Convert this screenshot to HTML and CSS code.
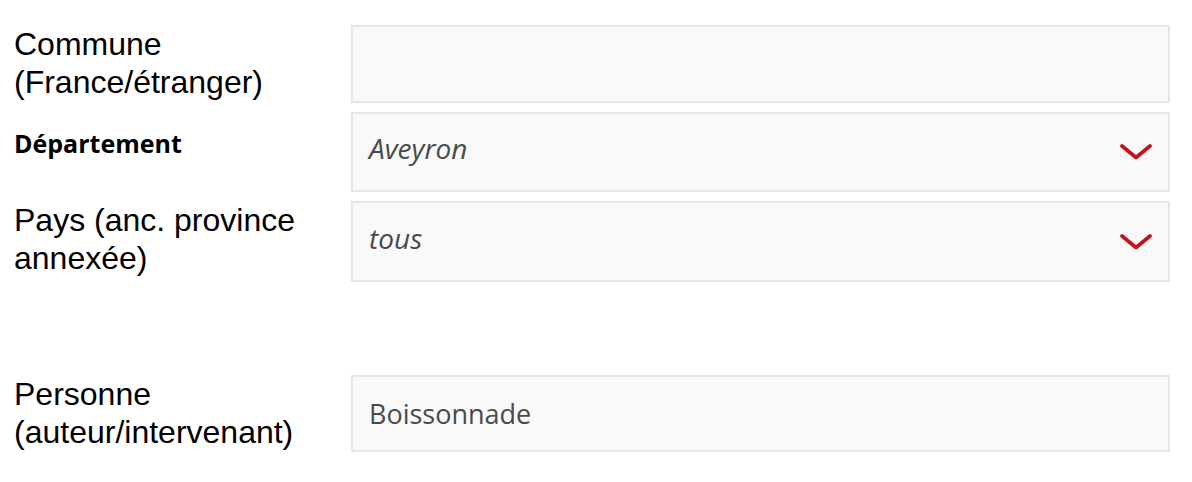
FILE: index.html
```html
<!DOCTYPE html>
<html lang="fr">
<head>
<meta charset="utf-8">
<title>Recherche</title>
<link rel="stylesheet" href="styles.css">
</head>
<body>
<form class="form">
  <div class="row row-1">
    <label class="label">Commune <span class="nowrap">(France/étranger)</span></label>
    <div class="field"><input class="input" type="text" value=""></div>
  </div>
  <div class="row row-2">
    <label class="label label-bold">Département</label>
    <div class="field select">
      <span class="value italic">Aveyron</span>
      <svg class="chevron" width="32" height="16" viewBox="0 0 32 16"><polyline points="2,2 16,13.5 30,2" fill="none" stroke="#c4111c" stroke-width="3.6" stroke-linecap="round" stroke-linejoin="round"/></svg>
    </div>
  </div>
  <div class="row row-3">
    <label class="label">Pays (anc. province annexée)</label>
    <div class="field select">
      <span class="value italic">tous</span>
      <svg class="chevron" width="32" height="16" viewBox="0 0 32 16"><polyline points="2,2 16,13.5 30,2" fill="none" stroke="#c4111c" stroke-width="3.6" stroke-linecap="round" stroke-linejoin="round"/></svg>
    </div>
  </div>
  <div class="row row-4">
    <label class="label">Personne <span class="nowrap">(auteur/intervenant)</span></label>
    <div class="field"><span class="value">Boissonnade</span></div>
  </div>
</form>
</body>
</html>
```
FILE: styles.css
```css
html, body {
  margin: 0;
  padding: 0;
  background: #ffffff;
}
body {
  padding: 25px 22px 0 14px;
}
.form {
  display: flex;
  flex-direction: column;
  gap: 9px;
}
.row {
  display: grid;
  grid-template-columns: 337px 1fr;
  align-items: start;
}
.row-4 {
  margin-top: 84px;
}
.label {
  font-family: "Liberation Sans", Arial, sans-serif;
  font-size: 32px;
  line-height: 38px;
  color: #000;
  padding-right: 10px;
}
.nowrap {
  white-space: nowrap;
}
.label-bold {
  font-family: "Open Sans", sans-serif;
  font-weight: 700;
  font-size: 25px;
  line-height: 34px;
  margin-top: 14px;
}
.field {
  box-sizing: border-box;
  height: 78px;
  border: 2px solid #e6e6e6;
  background: #f9f9f9;
  display: flex;
  align-items: center;
  padding: 0 16px;
}
.row-2 .field { height: 80px; }
.row-3 .field { height: 81px; }
.row-4 .field { height: 77px; }
.input {
  border: 0;
  background: transparent;
  width: 100%;
  height: 100%;
  font: inherit;
  outline: none;
  padding: 0;
}
.value {
  font-family: "Open Sans", sans-serif;
  font-size: 27px;
  color: #4a4a4a;
  flex: 1;
}
.italic {
  font-style: italic;
  font-size: 28px;
  padding-bottom: 8px;
}
.chevron {
  display: block;
  flex: none;
}
```
